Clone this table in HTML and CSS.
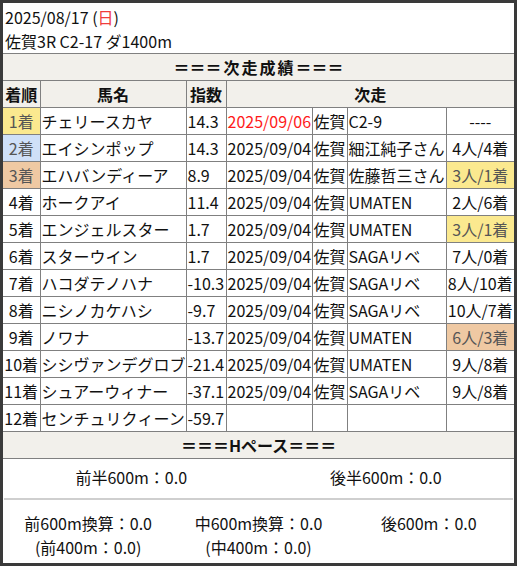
FILE: index.html
```html
<!DOCTYPE html>
<html lang="ja">
<head>
<meta charset="utf-8">
<title>次走成績</title>
<link rel="stylesheet" href="styles.css">
</head>
<body>
<div class="frame">
  <div class="head">
    <div class="line">2025/08/17 (<span class="sun">日</span>)</div>
    <div class="line">佐賀3R C2-17 ダ1400m</div>
  </div>
  <table class="res">
    <colgroup>
      <col class="c1"><col class="c2"><col class="c3"><col class="c4"><col class="c5"><col class="c6"><col class="c7">
    </colgroup>
    <tr><th colspan="7" class="title">＝＝＝<span class="wide">次走成績</span>＝＝＝</th></tr>
    <tr class="hdr"><th>着順</th><th>馬名</th><th>指数</th><th colspan="4">次走</th></tr>
    <tr><td class="rk gold">1着</td><td class="nm">チェリースカヤ</td><td class="ix">14.3</td><td class="dt red">2025/09/06</td><td class="pl">佐賀</td><td class="rc">C2-9</td><td class="rs">----</td></tr>
    <tr><td class="rk silver">2着</td><td class="nm">エイシンポップ</td><td class="ix">14.3</td><td class="dt">2025/09/04</td><td class="pl">佐賀</td><td class="rc">細江純子さん</td><td class="rs">4人/4着</td></tr>
    <tr><td class="rk bronze">3着</td><td class="nm">エハバンディーア</td><td class="ix">8.9</td><td class="dt">2025/09/04</td><td class="pl">佐賀</td><td class="rc">佐藤哲三さん</td><td class="rs gold">3人/1着</td></tr>
    <tr><td class="rk">4着</td><td class="nm">ホークアイ</td><td class="ix">11.4</td><td class="dt">2025/09/04</td><td class="pl">佐賀</td><td class="rc">UMATEN</td><td class="rs">2人/6着</td></tr>
    <tr><td class="rk">5着</td><td class="nm">エンジェルスター</td><td class="ix">1.7</td><td class="dt">2025/09/04</td><td class="pl">佐賀</td><td class="rc">UMATEN</td><td class="rs gold">3人/1着</td></tr>
    <tr><td class="rk">6着</td><td class="nm">スターウイン</td><td class="ix">1.7</td><td class="dt">2025/09/04</td><td class="pl">佐賀</td><td class="rc">SAGAリベ</td><td class="rs">7人/0着</td></tr>
    <tr><td class="rk">7着</td><td class="nm">ハコダテノハナ</td><td class="ix">-10.3</td><td class="dt">2025/09/04</td><td class="pl">佐賀</td><td class="rc">SAGAリベ</td><td class="rs">8人/10着</td></tr>
    <tr><td class="rk">8着</td><td class="nm">ニシノカケハシ</td><td class="ix">-9.7</td><td class="dt">2025/09/04</td><td class="pl">佐賀</td><td class="rc">SAGAリベ</td><td class="rs">10人/7着</td></tr>
    <tr><td class="rk">9着</td><td class="nm">ノワナ</td><td class="ix">-13.7</td><td class="dt">2025/09/04</td><td class="pl">佐賀</td><td class="rc">UMATEN</td><td class="rs bronze">6人/3着</td></tr>
    <tr><td class="rk">10着</td><td class="nm">シシヴァンデグロブ</td><td class="ix">-21.4</td><td class="dt">2025/09/04</td><td class="pl">佐賀</td><td class="rc">UMATEN</td><td class="rs">9人/8着</td></tr>
    <tr><td class="rk">11着</td><td class="nm">シュアーウィナー</td><td class="ix">-37.1</td><td class="dt">2025/09/04</td><td class="pl">佐賀</td><td class="rc">SAGAリベ</td><td class="rs">9人/8着</td></tr>
    <tr><td class="rk">12着</td><td class="nm">センチュリクィーン</td><td class="ix">-59.7</td><td class="dt"></td><td class="pl"></td><td class="rc"></td><td class="rs"></td></tr>
    <tr><th colspan="7" class="title">＝＝＝Hペース＝＝＝</th></tr>
  </table>
  <div class="pace1">
    <div class="cell">前半600m：0.0</div>
    <div class="cell">後半600m：0.0</div>
  </div>
  <div class="pace2">
    <div class="cell"><div>前600m換算：0.0</div><div>(前400m：0.0)</div></div>
    <div class="cell"><div>中600m換算：0.0</div><div>(中400m：0.0)</div></div>
    <div class="cell"><div>後600m：0.0</div></div>
  </div>
</div>
</body>
</html>
```
FILE: styles.css
```css
html, body {
  margin: 0;
  padding: 0;
  background: #ffffff;
}
body {
  font-family: "Noto Sans CJK JP", "Noto Sans", sans-serif;
  font-size: 16px;
  color: #111;
}
.frame {
  box-sizing: border-box;
  width: 517px;
  height: 566px;
  border: 3px solid #3a3a3a;
  background: #fff;
  overflow: hidden;
}
.head {
  padding: 2px 0 0 2px;
}
.head .line {
  line-height: 24px;
  height: 24px;
  white-space: nowrap;
}
.sun { color: #f03c3c; }
.res {
  border-collapse: collapse;
  table-layout: fixed;
  width: 511px;
  border-left: hidden;
  border-right: hidden;
}
.c1 { width: 37px; }
.c2 { width: 146px; }
.c3 { width: 40px; }
.c4 { width: 86px; }
.c5 { width: 35px; }
.c6 { width: 99px; }
.c7 { width: 68px; }
.res th, .res td {
  border: 1px solid #808080;
  padding: 0;
  line-height: 26px;
  height: 26px;
  white-space: nowrap;
  overflow: hidden;
  font-weight: normal;
}
.res th {
  font-weight: bold;
  background: #f2f0eb;
  text-align: center;
}
.res th .wide {
  letter-spacing: 2px;
  padding-left: 2px;
}
.rk { text-align: center; }
.nm, .ix, .dt, .pl, .rc { text-align: left; padding-left: 1px !important; }
.rs { text-align: center; }
.red { color: #ff1a1a; }
.gold { background: #fbe98f; color: #555; }
.silver { background: #cfe0f8; color: #555; }
.bronze { background: #efc9a3; color: #555; }
.pace1 {
  display: grid;
  grid-template-columns: 1fr 1fr;
  padding: 6px 0 9px;
  border-bottom: 2px solid #cfcfcf;
  margin: 0 1px;
}
.pace1 .cell, .pace2 .cell {
  text-align: center;
  line-height: 24px;
  white-space: nowrap;
}
.pace2 {
  display: grid;
  grid-template-columns: 1fr 1fr 1fr;
  padding: 11px 0 0;
}
```
